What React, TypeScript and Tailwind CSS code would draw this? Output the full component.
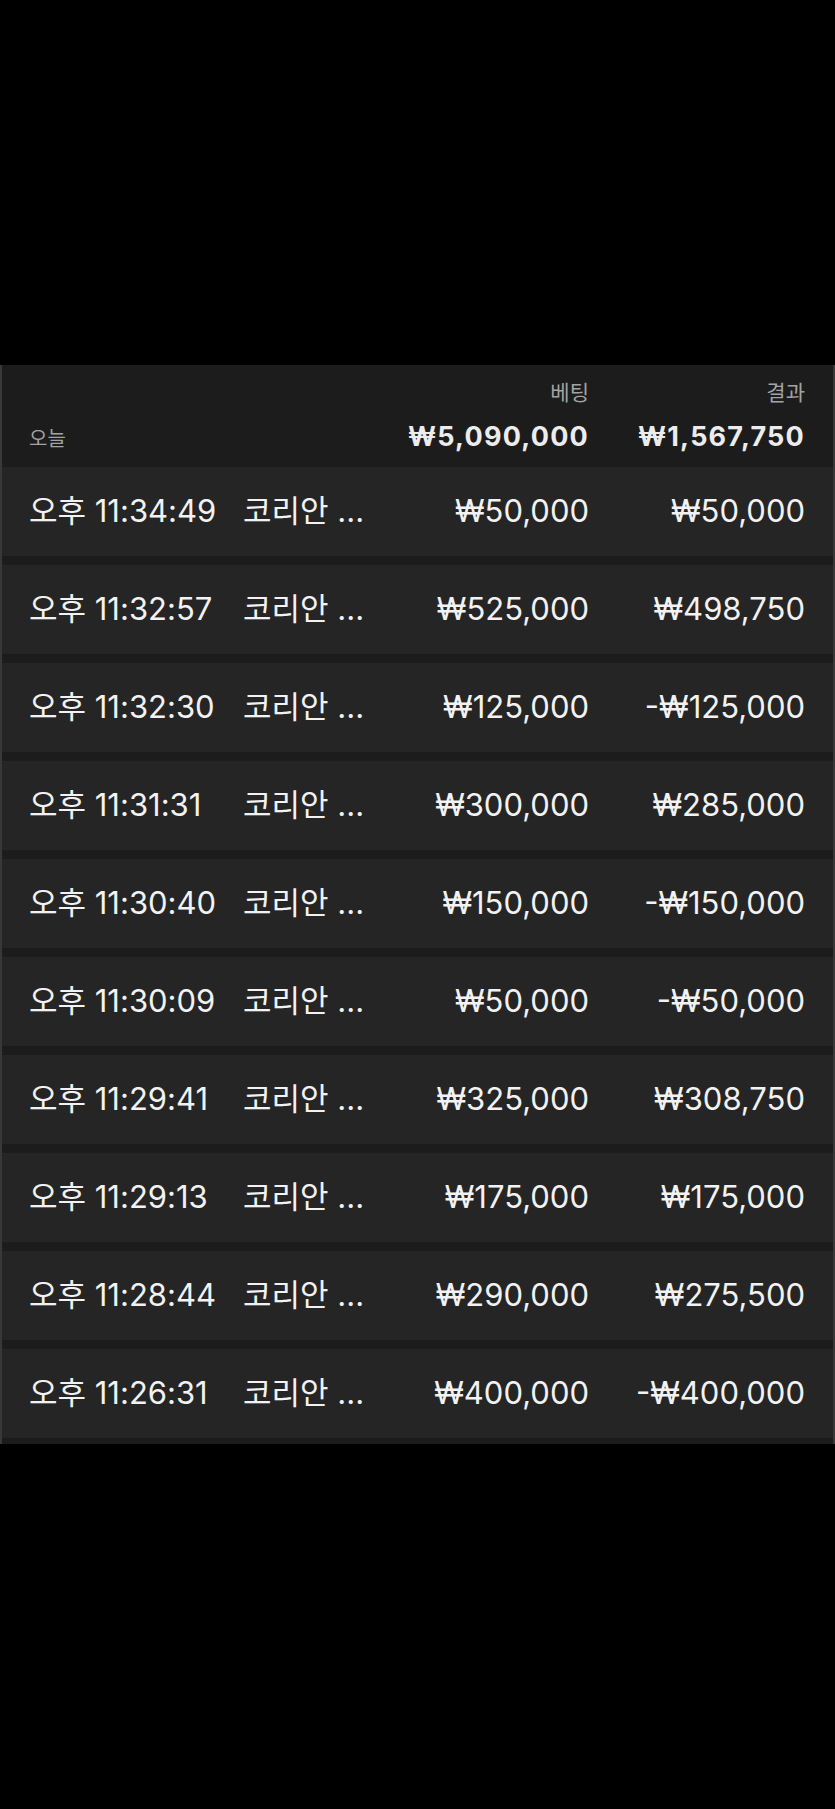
import React from "react";

const rows = [
  ["오후 11:34:49", "₩50,000", "₩50,000"],
  ["오후 11:32:57", "₩525,000", "₩498,750"],
  ["오후 11:32:30", "₩125,000", "-₩125,000"],
  ["오후 11:31:31", "₩300,000", "₩285,000"],
  ["오후 11:30:40", "₩150,000", "-₩150,000"],
  ["오후 11:30:09", "₩50,000", "-₩50,000"],
  ["오후 11:29:41", "₩325,000", "₩308,750"],
  ["오후 11:29:13", "₩175,000", "₩175,000"],
  ["오후 11:28:44", "₩290,000", "₩275,500"],
  ["오후 11:26:31", "₩400,000", "-₩400,000"],
];

const font = { fontFamily: "Inter, 'Noto Sans CJK KR', sans-serif" };

export default function App() {
  return (
    <div className="min-h-[1809px] w-[835px] bg-black pt-[365px]" style={font}>
      <div className="border-x-2 border-[#383838] bg-[#1c1c1c] pb-[6px]">
        <div className="flex h-[102px] pl-[27px] pr-[28px]">
          <div className="w-[214px] pt-[61px] text-[20px] leading-[26px] text-[#a3a3a3]">오늘</div>
          <div className="flex-1" />
          <div className="flex w-[200px] flex-col items-end pt-[17px]">
            <div className="text-[21px] leading-[22px] text-[#a3a3a3]">베팅</div>
            <div className="mt-[17px] text-[27px] font-bold leading-[32px] tracking-[0.045em] text-[#ececec]">₩5,090,000</div>
          </div>
          <div className="flex w-[216px] flex-col items-end pt-[17px]">
            <div className="text-[21px] leading-[22px] text-[#a3a3a3]">결과</div>
            <div className="mt-[17px] text-[27px] font-bold leading-[32px] tracking-[0.045em] text-[#ececec]">₩1,567,750</div>
          </div>
        </div>
        <div className="flex flex-col gap-[9px]">
          {rows.map(([t, b, r]) => (
            <div key={t} className="flex h-[89px] items-center bg-[#252525] pl-[27px] pr-[28px] text-[31px] text-[#f2f2f2]">
              <div className="w-[214px] whitespace-nowrap">{t}</div>
              <div className="flex-1 whitespace-nowrap">코리안 ...</div>
              <div className="w-[200px] text-right">{b}</div>
              <div className="w-[216px] text-right">{r}</div>
            </div>
          ))}
        </div>
      </div>
    </div>
  );
}
